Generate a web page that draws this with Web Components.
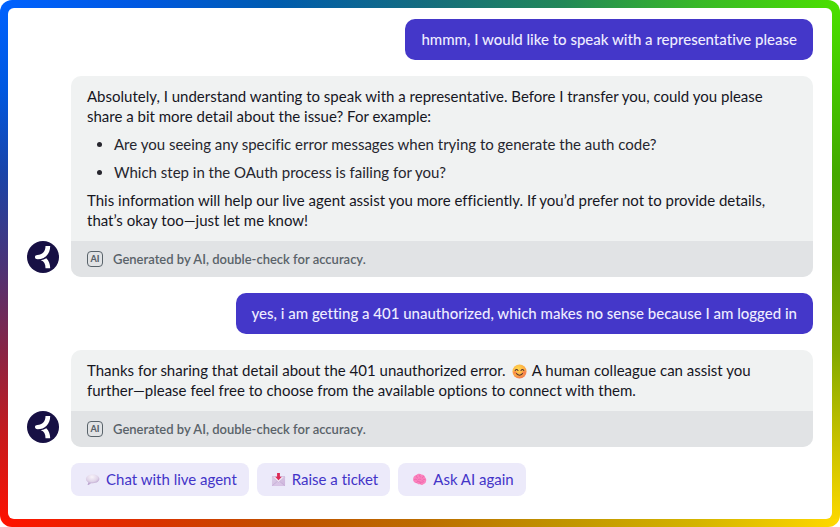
<!DOCTYPE html>
<html lang="en">
<head>
<meta charset="utf-8">
<title>Support chat</title>
<style>
  body { margin: 0; background: #fff; font: 15px/20px Lato, "Noto Sans", sans-serif; font-variant-ligatures: none; color: #16161f; }
</style>
</head>
<body>
<chat-frame>
  <user-message>hmmm, I would like to speak with a representative please</user-message>
  <agent-message>
    <chat-text>Absolutely, I understand wanting to speak with a representative. Before I transfer you, could you please share a bit more detail about the issue? For example:</chat-text>
    <chat-list>
      <chat-item>Are you seeing any specific error messages when trying to generate the auth code?</chat-item>
      <chat-item>Which step in the OAuth process is failing for you?</chat-item>
    </chat-list>
    <chat-text>This information will help our live agent assist you more efficiently. If you’d prefer not to provide details, that’s okay too—just let me know!</chat-text>
  </agent-message>
  <user-message>yes, i am getting a 401 unauthorized, which makes no sense because I am logged in</user-message>
  <agent-message>
    <chat-text>Thanks for sharing that detail about the 401 unauthorized error. <chat-icon name="smile"></chat-icon> A human colleague can assist you further—please feel free to choose from the available options to connect with them.</chat-text>
  </agent-message>
  <quick-replies>
    <quick-reply icon="bubble">Chat with live agent</quick-reply>
    <quick-reply icon="mail">Raise a ticket</quick-reply>
    <quick-reply icon="brain">Ask AI again</quick-reply>
  </quick-replies>
</chat-frame>
<script>
const ICONS = {
  smile: `<svg viewBox="0 0 16 16"><defs><radialGradient id="g" cx=".4" cy=".3" r=".75"><stop offset="0" stop-color="#ffd84e"/><stop offset=".6" stop-color="#fdae43"/><stop offset="1" stop-color="#ef7050"/></radialGradient></defs><circle cx="8" cy="8" r="7.5" fill="url(#g)"/><ellipse cx="3.3" cy="9" rx="1.7" ry="1.3" fill="#f66d50" opacity=".7"/><ellipse cx="12.7" cy="9" rx="1.7" ry="1.3" fill="#f66d50" opacity=".7"/><path d="M3.4 7Q4.9 4.6 6.4 7M9.6 7Q11.1 4.6 12.6 7M4.8 10.2Q8 13.7 11.2 10.2" fill="none" stroke="#563033" stroke-width="1.1" stroke-linecap="round"/></svg>`,
  bubble: `<svg viewBox="0 0 16 16"><defs><radialGradient id="g" cx=".45" cy=".25" r=".75"><stop offset="0" stop-color="#f8f4fa"/><stop offset=".6" stop-color="#dfd3e8"/><stop offset="1" stop-color="#b094c6"/></radialGradient></defs><path d="M8.3 2.6c4.2 0 7 2 7 4.7 0 2.800-2.900 4.700-7 4.700-.7 0-1.300 0-1.900-.1C5.400 13 4 13.700 2.600 13.500c.7-.7 1-1.500.9-2.500C1.800 10.100 1 8.900 1 7.300c0-2.700 3-4.700 7.300-4.700z" fill="url(#g)"/></svg>`,
  mail: `<svg viewBox="0 0 16 16"><defs><linearGradient id="g" x2="1" y2="1"><stop offset="0" stop-color="#ded1e8"/><stop offset="1" stop-color="#cdb2dc"/></linearGradient></defs><rect x="1" y="4.500" width="14" height="10.500" rx="1" fill="url(#g)"/><path d="M1.300 14.600 8 9l6.700 5.600" fill="#d9c5e6" stroke="#b99dcc" stroke-width=".5"/><path d="M1.300 5 8 11l6.700-6z" fill="#eee4f3" stroke="#c1a9d1" stroke-width=".5"/><path d="M6.500 1h3v4h2L8 8.700 4.500 5h2z" fill="#dc2a55"/></svg>`,
  brain: `<svg viewBox="0 0 16 16"><path d="M1.200 8.600C.8 5.200 2.800 3.500 4.600 3.200 6.100 1.600 8.600 1.500 10 2.600c2.100 0 3.600 1.300 3.900 3 1.300 1.200 1.700 3.200.9 4.800-.3 1.500-1.400 2.200-2.400 2.300-.8 1.400-2.700 1.600-3.400.4-1.700.3-2.900-.2-3.600-1.200-2 .2-3.900-.9-4.200-3.300z" fill="#fb82bd"/><path d="M4.700 4.100c-.4 1.300.2 2 1.300 2.100M8.300 3.100C7.600 4 7.900 5 9 5.300M12.600 4.800c-.9 0-1.500.5-1.600 1.400M2.200 8.300c1-.9 2.200-.7 3 0M6.200 8.600c1.200-1.500 2.800-1.200 3.600-.3M13.900 8.100c-1.200-.5-2.200 0-2.500.9M4.800 11.200c.5-1.200 2.300-1.500 3.700-.7 1.300.7 3 .6 3.900-.2M9 12.600l-.5-1.500" fill="none" stroke="#e459a3" stroke-width=".6" stroke-linecap="round"/></svg>`
};

const define = (name, css, html, setup) => {
  const template = document.createElement('template');
  template.innerHTML = `<style>${css}</style>${html}`;
  customElements.define(name, class extends HTMLElement {
    constructor() {
      super();
      this.attachShadow({ mode: 'open' }).append(template.content.cloneNode(true));
    }
    connectedCallback() { if (setup) setup(this, this.shadowRoot); }
  });
};

define('chat-frame', `
  :host { box-sizing: border-box; min-height: 100vh; padding: 8px; border-radius: 12px;
    display: flex; flex-direction: column;
    background:
      linear-gradient(90deg, #0062ff, #0058e0 17%, #005cae 33%, #146c80 50%, #228858 67%, #38b828 83%, #4be000) top / 100% 8px no-repeat,
      linear-gradient(90deg, #ff1200, #dc3000 17%, #c05000 33%, #bc6c00 50%, #c09400 67%, #d4b400 83%, #ffd900) bottom / 100% 8px no-repeat,
      linear-gradient(#0062ff, #0058e0 17%, #1a44a8 33%, #4a3478 50%, #8a2444 67%, #c81a1c 83%, #ff1200) left / 16px 100% no-repeat,
      linear-gradient(#4be000, #44c400 17%, #44a800 33%, #60a000 50%, #84aa00 67%, #c4c000 83%, #ffd900) right / 16px 100% no-repeat; }
  main { flex: 1; display: flex; flex-direction: column; gap: 16px; padding: 11px 19px 23px; background: #fff; border-radius: 6px; }
`, `<main><slot></slot></main>`);

define('user-message', `
  :host { display: flex; justify-content: flex-end; padding-left: 44px; }
  p { margin: 0; padding: 10px 16px 11px; border-radius: 10px; background: #4437c9; color: #eeecff; font-weight: 500; }
`, `<p><slot></slot></p>`);

define('agent-avatar', `
  :host { display: block; flex: none; width: 32px; height: 32px; }
  svg { display: block; width: 100%; height: 100%; }
`, `<svg viewBox="0 0 32 32" role="img" aria-label="Agent"><circle cx="16" cy="16" r="16" fill="#171044"/><path d="M18.500 5h4.700c0 8.300-5.500 13.300-12.500 13.300C8.800 18.300 7.900 17.200 8 15.800c.1-1.200 1-1.900 2.300-1.900 5 0 8.200-3.500 8.200-8.900z" fill="#fff"/><path d="M13.800 19.300c2-.3 3.900-1 5.500-2.100 2.600 2.500 3.900 6 3.900 10.100h-4.700c0-4.300-1.400-7.100-4.700-8z" fill="#fff"/></svg>`);

define('ai-notice', `
  :host { display: flex; align-items: center; gap: 10px; padding: 8px 16px; background: #e1e3e5; color: #596269; font-size: 13px; font-weight: 600; }
  .badge { box-sizing: border-box; width: 16px; height: 16px; border: 1px solid #59636a; border-radius: 4px; font-size: 9px; font-weight: 900; line-height: 14px; text-align: center; }
`, `<span class="badge">AI</span><span>Generated by AI, double-check for accuracy.</span>`);

define('agent-message', `
  :host { display: flex; align-items: flex-end; gap: 12px; }
  agent-avatar { margin-bottom: 4px; }
  article { flex: 1; min-width: 0; overflow: hidden; border-radius: 10px; background: #f0f2f2; }
  .body { display: flex; flex-direction: column; gap: 8px; padding: 10px 24px 11px 16px; }
`, `<agent-avatar></agent-avatar><article><div class="body"><slot></slot></div><ai-notice></ai-notice></article>`);

define('chat-text', `:host { display: block; } p { margin: 0; }`, `<p><slot></slot></p>`);
define('chat-list', `:host { display: flex; flex-direction: column; gap: 8px; padding-left: 27px; }`, `<slot></slot>`,
  host => host.setAttribute('role', 'list'));
define('chat-item', `:host { display: list-item; list-style: disc; color: #26262e; }`, `<slot></slot>`,
  host => host.setAttribute('role', 'listitem'));

define('chat-icon', `
  :host { display: inline-block; width: 15px; height: 15px; margin: 0 2px; vertical-align: -3px; }
  svg { display: block; width: 100%; height: 100%; }
`, `<span></span>`, (host, root) => {
  root.querySelector('span').innerHTML = ICONS[host.getAttribute('name')];
});

define('quick-replies', `
  :host { display: flex; flex-wrap: wrap; gap: 8px; padding-left: 44px; }
`, `<slot></slot>`);

define('quick-reply', `
  :host { display: block; }
  button { display: flex; align-items: center; gap: 4px; margin: 0; padding: 6px 12px 7px; border: 0; border-radius: 8px;
    background: #eceafa; color: #4334c8; font: inherit; font-variant-ligatures: none; cursor: pointer; }
`, `<button type="button"><span class="icon"></span><slot></slot></button>`, (host, root) => {
  const icon = document.createElement('chat-icon');
  icon.setAttribute('name', host.getAttribute('icon'));
  root.querySelector('.icon').replaceWith(icon);
});
</script>
</body>
</html>
